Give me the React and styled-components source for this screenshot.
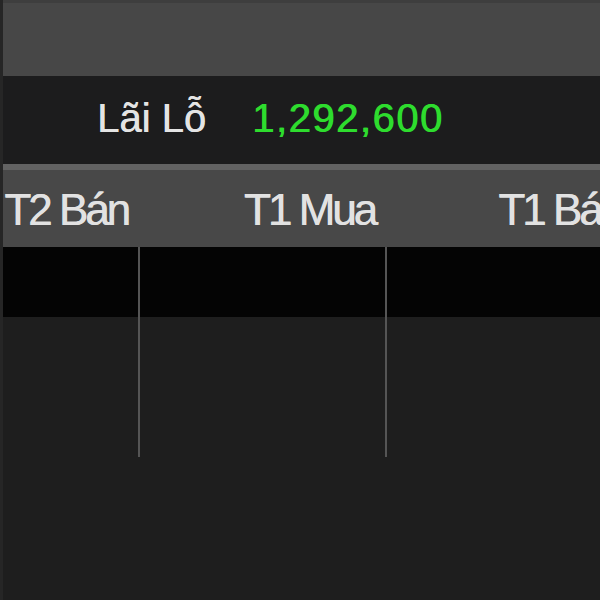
import React from "react";
import styled, { createGlobalStyle } from "styled-components";

const Global = createGlobalStyle`
  html, body { margin: 0; padding: 0; background: #1e1e1e; }
  body { font-family: "Liberation Sans", Arial, sans-serif; }
`;

const Page = styled.div`
  width: 600px;
  height: 600px;
  overflow: hidden;
  display: flex;
  flex-direction: column;
  background: #1e1e1e;
  border-left: 3px solid #262626;
  box-sizing: border-box;
`;

const TopBar = styled.div`
  height: 73px;
  flex: none;
  background: #474747;
  border-top: 3px solid #3e3e3e;
`;

const Summary = styled.div`
  height: 88px;
  flex: none;
  background: #1c1c1d;
  display: flex;
  align-items: center;
  padding-left: 94px;
  padding-bottom: 3px;
  box-sizing: border-box;
  gap: 46px;
  font-size: 40px;
`;

const Label = styled.span`
  color: #e4e4e4;
  text-shadow: 0.6px 0 0 #e4e4e4;
`;

const Value = styled.span`
  color: #2edc2e;
  letter-spacing: 1.5px;
  text-shadow: 0.8px 0 0 #2edc2e;
`;

const Grid = styled.div`
  display: grid;
  grid-template-columns: 137px 247px 247px;
  flex: none;
`;

const HeaderRow = styled(Grid)`
  height: 83px;
  background: #484848;
  border-top: 6px solid #626262;
  box-sizing: border-box;
`;

const HeadCell = styled.div`
  display: flex;
  align-items: center;
  justify-content: flex-end;
  padding-right: 12px;
  padding-top: 3px;
  font-size: 44px;
  letter-spacing: -3px;
  color: #e2e2e2;
  text-shadow: 0.6px 0 0 #e2e2e2;
  white-space: nowrap;
`;

const BodyRow = styled(Grid)`
  height: 70px;
  background: ${(p) => (p.$dark ? "#040404" : "transparent")};
`;

const BodyCell = styled.div`
  border-right: 2px solid ${(p) => (p.$last ? "transparent" : "#555555")};
`;

const columns = ["T2 Bán", "T1 Mua", "T1 Bán"];

export default function App() {
  return (
    <>
      <Global />
      <Page>
        <TopBar />
        <Summary>
          <Label>Lãi Lỗ</Label>
          <Value>1,292,600</Value>
        </Summary>
        <HeaderRow>
          {columns.map((c) => (
            <HeadCell key={c}>{c}</HeadCell>
          ))}
        </HeaderRow>
        {[true, false, false].map((dark, i) => (
          <BodyRow key={i} $dark={dark}>
            <BodyCell />
            <BodyCell />
            <BodyCell $last />
          </BodyRow>
        ))}
      </Page>
    </>
  );
}
